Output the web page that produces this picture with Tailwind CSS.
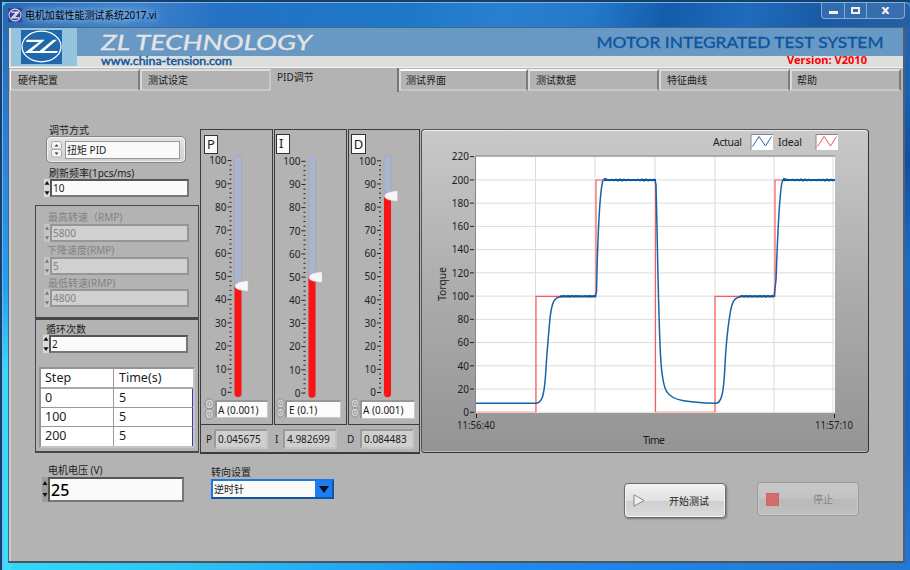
<!DOCTYPE html>
<html lang="zh-CN">
<head>
  <meta charset="UTF-8" />
  <meta name="viewport" content="width=device-width, initial-scale=1" />
  <title>电机加载性能测试系统2017.vi</title>
  <script src="https://cdn.jsdelivr.net/npm/@tailwindcss/browser@4"></script>
</head>
<body class="w-[910px] h-[570px] overflow-hidden bg-[#0d3c78] font-['Noto_Sans','Noto_Sans_CJK_SC',sans-serif] text-[10px] leading-none text-[#1c1c1c]">
  <div class="w-[910px] h-[570px] flex flex-col bg-[linear-gradient(90deg,#35d8f8_0%,#2cc4f5_20%,#1d8af0_55%,#2378d4_100%)] border-t-2 border-l-2 border-[#15406e]">
    <div class="h-[568px] flex flex-col rounded-t-md border-t border-l border-[#7fb2e0] bg-[linear-gradient(180deg,#2569b4_0%,#2a80dc_25%,#1fa0f4_50%,#38d8fb_65%,#3edcfc_100%),linear-gradient(180deg,#2a64a8_0%,#1862b8_15%,#0e4fa4_28%,#1c6cc8_45%,#1a62bc_75%,#2378dc_100%)] bg-no-repeat bg-[position:left_top,right_top] bg-[size:8px_100%,6px_100%]">

      <!-- Title bar -->
      <div class="h-[24px] shrink-0 flex items-start rounded-t-md bg-[linear-gradient(105deg,#2868b2_0%,#4284cc_14%,#2472c4_24%,#1e78c8_45%,#2a80d0_55%,#2478c8_65%,#145cac_73%,#1f6cbc_82%,#1a5aa6_90%,#2460a4_100%)] pl-[5px]">
        <svg class="mt-[5px] w-[14px] h-[14px]" viewBox="0 0 44 38" preserveAspectRatio="none">
          <rect width="44" height="38" fill="#3b3f94" />
          <ellipse cx="22" cy="19" rx="19" ry="16" fill="none" stroke="#d4dcf0" stroke-width="3" />
          <path d="M10 11H28L12 27H24M34 10L19 27H36" fill="none" stroke="#e8ecf8" stroke-width="3.5" />
        </svg>
        <div class="mt-[5px] ml-[3px] h-[14px] leading-[14px] tracking-[-0.1px] whitespace-nowrap text-black [text-shadow:0_0_6px_#a8d0f4,0_0_8px_#a8d0f4]">电机加载性能测试系统2017.vi</div>
        <div class="ml-auto mr-[5px] h-[16px] w-[84px] flex rounded-b-[4px] border border-t-0 border-[#86a9cf] bg-white/10 text-white">
          <div class="w-[23px] flex justify-center border-r border-[#86a9cf] pt-[8px]"><span class="w-[9px] h-[3px] bg-[#f5f0e8]"></span></div>
          <div class="w-[22px] flex justify-center border-r border-[#86a9cf] pt-[4px]"><span class="w-[9px] h-[7px] border-2 border-[#f5f0e8]"></span></div>
          <div class="flex-1 flex justify-center pt-[4px]">
            <svg class="w-[9px] h-[7px]" viewBox="0 0 9 7"><path d="M1.5 0L7.5 7M7.5 0L1.5 7" stroke="#f5f0e8" stroke-width="2.2" /></svg>
          </div>
        </div>
      </div>

      <!-- Client area -->
      <div class="ml-[5px] w-[897px] h-[536px] flex flex-col border-l border-t border-[#4b6680] border-r-2 border-r-[#56606c] border-b-2 border-b-[#4b555c] bg-[#b3b3b3]">
        <header class="h-[39px] shrink-0 flex pl-[2px] bg-[#dededc]">
          <div class="w-[66px] h-[38px] bg-[#96c4de] flex items-center justify-center pr-[6px]">
            <svg class="w-[41px] h-[34px]" viewBox="0 0 42 35" preserveAspectRatio="none">
              <rect width="42" height="35" fill="#1f68ac" />
              <ellipse cx="21" cy="17" rx="20" ry="15.800" fill="none" stroke="#fff" stroke-width="1.300" />
              <path d="M6 10H24.500L11 21.500H21L19 23.800H3.500L18.500 12.300H5Z" fill="#fff" />
              <path d="M33 10H37L23.500 21.500H38L36.500 23.800H16.500Z" fill="#fff" />
            </svg>
          </div>
          <div class="flex-1 flex flex-col">
            <div class="h-[28px] bg-[#6899c5] flex justify-between font-['Lato',sans-serif]">
              <svg class="w-[260px] h-[28px]" viewBox="0 0 260 28"><text x="24" y="22" textLength="211" lengthAdjust="spacingAndGlyphs" font-size="21.500" font-style="italic" fill="#e4e4e4" stroke="#e4e4e4" stroke-width=".3">ZL TECHNOLOGY</text></svg>
              <svg class="w-[320px] h-[28px]" viewBox="0 0 320 28"><text x="13.500" y="20" textLength="287" lengthAdjust="spacingAndGlyphs" font-size="16" fill="#0c559d" stroke="#0c559d" stroke-width=".35">MOTOR INTEGRATED TEST SYSTEM</text></svg>
            </div>
            <div class="h-[11px] flex justify-between">
              <svg class="w-[200px] h-[11px] overflow-visible font-['Lato',sans-serif]" viewBox="0 0 200 11"><text x="24" y="9" textLength="131" lengthAdjust="spacingAndGlyphs" font-size="10.500" fill="#0c559d" stroke="#0c559d" stroke-width=".4">www.china-tension.com</text></svg>
              <svg class="w-[120px] h-[11px] overflow-visible" viewBox="0 0 120 11"><text x="4" y="8" textLength="80" lengthAdjust="spacingAndGlyphs" font-size="10.500" font-weight="700" fill="#fe0000">Version: V2010</text></svg>
            </div>
          </div>
        </header>

        <!-- Tabs -->
        <nav class="h-[24px] shrink-0 flex items-start pl-[1px] border-t border-[#f4f4f4] text-[#202020]">
          <div class="w-[130px] h-[22px] mt-[1px] pl-[7px] pt-[4px] border-t-2 border-l border-r-2 border-b-2 border-t-[#dedede] border-l-white border-r-[#7b7b7b] border-b-[#c8c8c8]">硬件配置</div>
          <div class="w-[131px] h-[22px] mt-[1px] pl-[6px] pt-[4px] border-t-2 border-l-2 border-r-2 border-b-2 border-t-[#dedede] border-l-[#d8d8d8] border-r-[#c8c8c8] border-b-[#c8c8c8]">测试设定</div>
          <div class="w-[128px] h-[24px] pl-[6px] pt-[4px] border-r-2 border-[#777]">PID调节</div>
          <div class="w-[129px] h-[22px] mt-[1px] pl-[5px] pt-[4px] border-t-2 border-l-2 border-r-2 border-b-2 border-t-white border-l-[#d8d8d8] border-r-[#7b7b7b] border-b-[#c8c8c8]">测试界面</div>
          <div class="w-[131px] h-[22px] mt-[1px] pl-[6px] pt-[4px] border-t-2 border-l-2 border-r-2 border-b-2 border-t-[#f0f0f0] border-l-[#d8d8d8] border-r-[#7b7b7b] border-b-[#c8c8c8]">测试数据</div>
          <div class="w-[131px] h-[22px] mt-[1px] pl-[6px] pt-[4px] border-t-2 border-l-2 border-r-2 border-b-2 border-t-[#dedede] border-l-[#d8d8d8] border-r-[#7b7b7b] border-b-[#c8c8c8]">特征曲线</div>
          <div class="w-[111px] h-[22px] mt-[1px] pl-[5px] pt-[4px] border-t-2 border-l-2 border-r-2 border-b-2 border-t-[#dedede] border-l-[#d8d8d8] border-r-[#7b7b7b] border-b-[#c8c8c8]">帮助</div>
        </nav>

        <!-- PID page -->
        <main class="flex-1 flex items-start border-l-2 border-[#c9c9c9] pl-[24px]">

          <!-- Left parameters -->
          <section class="w-[164px] pt-[34px] flex flex-col">
            <div class="h-[11px] pl-[14px] leading-[11px]">调节方式</div>
            <div class="ml-[11px] w-[140px] h-[27px] flex items-center rounded-[5px] border border-[#858585] bg-gradient-to-b from-[#e4e4e4] to-[#cfcfcf] shadow-[inset_0_0_0_1px_#f2f2f2] pl-[4px]">
              <svg class="w-[11px] h-[17px]" viewBox="0 0 11 17">
                <rect x=".5" y=".5" width="10" height="7.500" rx="2" fill="#f6f6f6" stroke="#aaa" />
                <rect x=".5" y="8.500" width="10" height="7.500" rx="2" fill="#f6f6f6" stroke="#aaa" />
                <path d="M3.500 5.500L5.500 3.200L7.500 5.500ZM3.500 11.500L5.500 13.800L7.500 11.500Z" fill="#333" />
              </svg>
              <div class="ml-[3px] w-[115px] h-[18px] pl-[1px] leading-[16px] border border-[#989898] bg-[#fafafa]">扭矩 PID</div>
            </div>
            <div class="h-[16px] pl-[14px] leading-[20px] whitespace-nowrap">刷新频率(1pcs/ms)</div>
            <div class="ml-[9px] h-[18px] flex">
              <svg class="w-[6px] h-[18px]" viewBox="0 0 6 19" preserveAspectRatio="none"><rect width="6" height="19" fill="#d9d9d9" /><path d="M.5 6L3 2L5.500 6ZM.5 13L3 17L5.500 13Z" fill="#111" /></svg>
              <div class="w-[139px] h-[18px] pl-px leading-[14px] border-2 border-[#555] border-r-[#777] border-b-[#777] bg-[#fafafa]">10</div>
            </div>

            <div class="mt-[8px] w-[164px] h-[114px] flex flex-col border border-[#484848] border-b-2 text-[#828282]">
              <div class="h-[18px] pl-[12px] leading-[23px] whitespace-nowrap">最高转速（RMP)</div>
              <div class="ml-[8px] h-[18px] flex">
                <svg class="w-[6px] h-[18px]" viewBox="0 0 6 19" preserveAspectRatio="none"><rect width="6" height="19" fill="#c4c4c4" /><path d="M1 6L3 2.500L5 6ZM1 13L3 16.500L5 13Z" fill="#777" /></svg>
                <div class="w-[139px] h-[18px] pl-px leading-[14px] border-2 border-[#969696] bg-[#d0d0d0]">5800</div>
              </div>
              <div class="h-[15px] pl-[11px] leading-[17px] whitespace-nowrap">下降速度(RMP)</div>
              <div class="ml-[8px] h-[18px] flex">
                <svg class="w-[6px] h-[18px]" viewBox="0 0 6 19" preserveAspectRatio="none"><rect width="6" height="19" fill="#c4c4c4" /><path d="M1 6L3 2.500L5 6ZM1 13L3 16.500L5 13Z" fill="#777" /></svg>
                <div class="w-[139px] h-[18px] pl-px leading-[14px] border-2 border-[#969696] bg-[#d0d0d0]">5</div>
              </div>
              <div class="h-[14px] pl-[12px] leading-[16px] whitespace-nowrap">最低转速(RMP)</div>
              <div class="ml-[8px] h-[18px] flex">
                <svg class="w-[6px] h-[18px]" viewBox="0 0 6 19" preserveAspectRatio="none"><rect width="6" height="19" fill="#c4c4c4" /><path d="M1 6L3 2.500L5 6ZM1 13L3 16.500L5 13Z" fill="#777" /></svg>
                <div class="w-[139px] h-[18px] pl-px leading-[14px] border-2 border-[#969696] bg-[#d0d0d0]">4800</div>
              </div>
            </div>

            <div class="w-[164px] h-[134px] flex flex-col border border-[#484848] border-b-2">
              <div class="h-[15px] pl-[10px] leading-[18px]">循环次数</div>
              <div class="ml-[7px] h-[18px] flex">
                <svg class="w-[6px] h-[18px]" viewBox="0 0 6 19" preserveAspectRatio="none"><rect width="6" height="19" fill="#d9d9d9" /><path d="M.5 6L3 2L5.500 6ZM.5 13L3 17L5.500 13Z" fill="#111" /></svg>
                <div class="w-[139px] h-[18px] pl-px leading-[14px] border-2 border-[#555] border-r-[#777] border-b-[#777] bg-[#fafafa]">2</div>
              </div>
              <div class="mt-[14px] ml-[3px] w-[156px] h-[81px] grid grid-cols-[72px_1px_79px] grid-rows-[20px_19px_19px_19px] border-2 border-[#949494] border-b-[#c4c4c4] border-r-[#c4c4c4] bg-white text-[12.500px] leading-[18px]">
                <div class="pl-[4px] border-b-2 border-[#aaa]">Step</div><div class="bg-[#999]"></div><div class="pl-[5px] border-b-2 border-[#aaa]">Time(s)</div>
                <div class="pl-[4px] border-b border-[#999]">0</div><div class="bg-[#999]"></div><div class="pl-[5px] border-b border-b-[#999] border-r border-r-[#3a3ab0]">5</div>
                <div class="pl-[4px] border-b border-[#999]">100</div><div class="bg-[#999]"></div><div class="pl-[5px] border-b border-b-[#999] border-r border-r-[#3a3ab0]">5</div>
                <div class="pl-[4px]">200</div><div class="bg-[#999]"></div><div class="pl-[5px] border-r border-r-[#3a3ab0]">5</div>
              </div>
            </div>

            <div class="mt-[12px] h-[12px] pl-[13px] leading-[11px] whitespace-nowrap">电机电压 (V)</div>
            <div class="ml-[7px] h-[25px] flex">
              <svg class="w-[6px] h-[25px]" viewBox="0 0 6 25"><rect width="6" height="25" fill="#9c9c9c" /><path d="M.5 8L3 4L5.500 8ZM.5 16L3 20L5.500 16Z" fill="#111" /></svg>
              <div class="w-[136px] h-[25px] pl-[1px] leading-[23px] text-[16px] font-medium text-black border-2 border-[#555] border-r-[#777] border-b-[#777] bg-[#fafafa]">25</div>
            </div>
          </section>

          <div class="flex flex-col">
            <div class="flex">
              <!-- P / I / D sliders -->
              <section class="ml-px mt-[38px] w-[221px] h-[325px] flex flex-col">
                <div class="h-[296px] flex gap-[1px]">
                  <div class="w-[73px] border border-[#3c3c3c] flex flex-col">
                    <div class="mt-[5px] ml-[3px] w-[14px] h-[19px] border border-[#333] bg-[#fafafa] text-[13px] leading-[17px] text-center">P</div>
                    <svg class="slider w-[71px] h-[246px]" data-shift="0" data-top="6.6" data-value="45.9"></svg>
                    <div class="ml-[3px] h-[18px] flex">
                      <svg class="w-[11px] h-[22px] -mt-[2px]" viewBox="0 0 11 22"><ellipse cx="5.500" cy="6" rx="4.500" ry="5" fill="#ccc" stroke="#8b8b8b" /><ellipse cx="5.500" cy="16" rx="4.500" ry="5" fill="#ccc" stroke="#8b8b8b" /><path d="M3.500 7L5.500 3.500L7.500 7ZM3.500 15L5.500 18.500L7.500 15Z" fill="#f4f4f4" stroke="#777" stroke-width=".7" /></svg>
                      <div class="w-[53px] h-[18px] pl-[1px] leading-[16px] whitespace-nowrap border-t-2 border-l-2 border-r border-b border-[#969696] border-r-[#c9c9c9] border-b-[#c9c9c9] bg-[#fbfbfb]">A (0.001)</div>
                    </div>
                  </div>
                  <div class="w-[73px] border border-[#3c3c3c] flex flex-col">
                    <div class="mt-[4px] ml-[1px] w-[14px] h-[20px] border border-[#333] bg-[#fafafa] text-[13px] leading-[17px] pl-[2px]">I</div>
                    <svg class="slider w-[71px] h-[246px]" data-shift="0" data-top="7.3" data-value="50"></svg>
                    <div class="ml-[1px] h-[18px] flex">
                      <svg class="w-[9px] h-[20px] -mt-[2px]" viewBox="0 0 11 22" preserveAspectRatio="none"><ellipse cx="5.500" cy="6" rx="4.500" ry="5" fill="#ccc" stroke="#8b8b8b" /><ellipse cx="5.500" cy="16" rx="4.500" ry="5" fill="#ccc" stroke="#8b8b8b" /><path d="M3.500 7L5.500 3.500L7.500 7ZM3.500 15L5.500 18.500L7.500 15Z" fill="#f4f4f4" stroke="#777" stroke-width=".7" /></svg>
                      <div class="w-[56px] h-[18px] pl-[2px] leading-[16px] whitespace-nowrap border-t-2 border-l-2 border-r border-b border-[#969696] border-r-[#c9c9c9] border-b-[#c9c9c9] bg-[#fbfbfb]">E (0.1)</div>
                    </div>
                  </div>
                  <div class="w-[72px] border border-[#3c3c3c] flex flex-col">
                    <div class="mt-[4px] ml-[2px] w-[15px] h-[20px] border border-[#333] bg-[#fafafa] text-[13px] leading-[18px] text-center">D</div>
                    <svg class="slider w-[70px] h-[246px]" data-shift="1.5" data-top="6.8" data-value="84.8"></svg>
                    <div class="ml-[1px] h-[18px] flex">
                      <svg class="w-[10px] h-[20px] -mt-[2px]" viewBox="0 0 11 22" preserveAspectRatio="none"><ellipse cx="5.500" cy="6" rx="4.500" ry="5" fill="#ccc" stroke="#8b8b8b" /><ellipse cx="5.500" cy="16" rx="4.500" ry="5" fill="#ccc" stroke="#8b8b8b" /><path d="M3.500 7L5.500 3.500L7.500 7ZM3.500 15L5.500 18.500L7.500 15Z" fill="#f4f4f4" stroke="#777" stroke-width=".7" /></svg>
                      <div class="w-[55px] h-[19px] pl-[1px] leading-[17px] whitespace-nowrap border-t-2 border-l-2 border-r border-b border-[#969696] border-r-[#c9c9c9] border-b-[#c9c9c9] bg-[#fbfbfb]">A (0.001)</div>
                    </div>
                  </div>
                </div>
                <div class="w-[220px] h-[29px] flex items-center border border-t-0 border-[#3c3c3c] border-b-2 pl-[5px]">
                  <span class="w-[8px]">P</span>
                  <div class="w-[54px] h-[20px] pl-[2px] leading-[17px] border-2 border-[#9a9a9a] border-r-[#c4c4c4] border-b-[#c4c4c4] bg-[#cfcfcf]">0.045675</div>
                  <span class="w-[15px] pl-[7px]">I</span>
                  <div class="w-[54px] h-[20px] pl-[2px] leading-[17px] border-2 border-[#9a9a9a] border-r-[#c4c4c4] border-b-[#c4c4c4] bg-[#cfcfcf]">4.982699</div>
                  <span class="w-[23px] pl-[10px]">D</span>
                  <div class="w-[54px] h-[20px] pl-[2px] leading-[17px] border-2 border-[#9a9a9a] border-r-[#c4c4c4] border-b-[#c4c4c4] bg-[#cfcfcf]">0.084483</div>
                </div>
              </section>

              <!-- Torque chart -->
              <section class="mt-[38px] w-[448px] h-[324px] rounded-[4px] border border-[#555] border-r-[#333] border-b-[#333] bg-gradient-to-b from-[#c9c9c9] via-[#acacac] via-50% to-[#949494] shadow-[inset_0_1px_0_#eee,inset_0_-1px_0_#bbb]">
                <svg id="chart" class="w-[446px] h-[322px]" viewBox="422 130 446 322" font-size="10.5" fill="#1c1c1c">
                  <text x="713" y="145.500" textLength="29">Actual</text>
                  <rect x="751" y="134.500" width="22" height="15.500" fill="#fff" />
                  <path d="M751 150V134.500H773" fill="none" stroke="#888" />
                  <path d="M752.500 146.500L759 136.500L765.500 146L771.500 136.500" fill="none" stroke="#1c68ac" />
                  <text x="778" y="145.500" textLength="24">Ideal</text>
                  <rect x="816" y="134.500" width="22" height="15.500" fill="#fff" />
                  <path d="M816 150V134.500H838" fill="none" stroke="#888" />
                  <path d="M817.500 146.500L824 136.500L830.500 146L836.500 136.500" fill="none" stroke="#ff5050" />
                  <rect x="475" y="156" width="360" height="257" fill="#fff" />
                  <g id="grid" stroke="#dcdcdc"></g>
                  <path d="M475.500 413V156H835" fill="none" stroke="#858585" />
                  <path d="M476 412H536M655.500 412H715" fill="none" stroke="#ffaaaa" />
                  <path d="M536 412V296.300H596V180H602M655.500 180V412M715 412V296.300H775V180H782" fill="none" stroke="#ff5a5a" stroke-width="1.2" />
                  <path id="actual" fill="none" stroke="#1463a8" stroke-width="1.500" stroke-linejoin="round" />
                  <path id="settled" fill="none" stroke="#0d559c" stroke-width="2" stroke-linejoin="round" />
                  <path d="M476.500 414V418M834.500 414V418" stroke="#222" />
                  <text x="457" y="429" textLength="38" lengthAdjust="spacingAndGlyphs">11:56:40</text>
                  <text x="815" y="429" textLength="38" lengthAdjust="spacingAndGlyphs">11:57:10</text>
                  <text x="643" y="444" textLength="22">Time</text>
                  <text transform="translate(446 301) rotate(-90)" textLength="34">Torque</text>
                </svg>
              </section>
            </div>

            <div class="flex items-start">
              <div class="mt-[12px] ml-[12px]">
                <div class="h-[12px] leading-[12px]">转向设置</div>
                <div class="mt-px w-[123px] h-[20px] flex border-2 border-[#1878ea] border-b-[#1254a8] border-r-[#1254a8] bg-[#fafafa]">
                  <div class="flex-1 pl-[1px] leading-[17px]">逆时针</div>
                  <div class="w-[17px] bg-[#1c7cf0] flex items-center justify-center">
                    <svg class="w-[10px] h-[7px]" viewBox="0 0 10 7"><path d="M0 0H10L5 7Z" fill="#06101c" /></svg>
                  </div>
                </div>
              </div>
              <button class="mt-[29px] ml-[290px] w-[102px] h-[35px] flex items-center rounded-[4px] border border-[#6c6c6c] bg-[linear-gradient(180deg,#f2f2f2_0%,#e0e0e0_50%,#cfcfcf_52%,#dcdcdc_100%)] shadow-[inset_0_0_0_1px_#f4f4f4,1px_1px_2px_#777] pl-[8px]">
                <svg class="w-[12px] h-[13px]" viewBox="0 0 12 13"><path d="M1 .8L11 6.500L1 12.200Z" fill="#f0f0f0" stroke="#888" /></svg>
                <span class="ml-[24px]">开始测试</span>
              </button>
              <button class="mt-[28px] ml-[31px] w-[102px] h-[34px] flex items-center rounded-[4px] border border-[#9c9c9c] bg-[linear-gradient(180deg,#c8c8c8_0%,#c2c2c2_50%,#b9b9b9_52%,#c0c0c0_100%)] shadow-[inset_0_0_0_1px_#c8c8c8] text-[#858585] pl-[8px]">
                <span class="w-[13px] h-[13px] bg-[#d36c6c] border border-[#c66]"></span>
                <span class="ml-[34px]">停止</span>
              </button>
            </div>
          </div>
        </main>
      </div>
    </div>
  </div>

  <script>
    (function() {
      // Vertical sliders: scale, track and thumb
      document.querySelectorAll('.slider').forEach(el => {
        const dx = Number(el.dataset.shift);
        const top = Number(el.dataset.top);
        const value = Number(el.dataset.value);
        const y = v => top + (100 - v) * 2.317;
        let out = '<rect x="' + (33.5 + dx) + '" y="' + (top - 5.5) + '" width="7" height="242" rx="3.5" fill="#a9b4cf" stroke="#8f99b0" stroke-width=".4"/>';
        out += '<path d="M' + (33.5 + dx) + ' ' + y(value) + 'h7V' + (top + 233) + 'a3.5 3.5 0 0 1 -7 0Z" fill="#fb1414"/>';
        for (let v = 0; v <= 100; v += 2) {
          const major = v % 10 === 0;
          out += '<path d="M' + ((major ? 26.5 : 28.5) + dx) + ' ' + y(v) + 'H' + (30.5 + dx) + '" stroke="#222"/>';
          if (major) {
            out += '<text x="' + (25.5 + dx) + '" y="' + (y(v) + 3.8) + '" text-anchor="end" font-size="10" fill="#222">' + v + '</text>';
          }
        }
        out += '<path d="M' + (34 + dx) + ' ' + (y(value) + .3) + 'c0 -2.5 4 -4.2 7 -4.6l4.500 -1q1.500 0 1.500 1.500v7.500q0 1.500 -1.500 1.500l-4.500 -.8c-3 -.4 -7 -1.600 -7 -4.100Z" fill="#f6f6f6" stroke="#c4c4c4" stroke-width=".5"/>';
        el.innerHTML = out;
      });

      // Chart grid and Y axis
      let grid = '';
      for (let v = 0; v <= 220; v += 20) {
        const y = 412.3 - v * 1.162;
        grid += '<path d="M476 ' + y + 'H835"/>';
        grid += '<path d="M470 ' + y + 'H474" stroke="#222"/>';
        grid += '<text x="469" y="' + (y + 3.8) + '" text-anchor="end" stroke="none" font-size="10">' + v + '</text>';
      }
      [535.5, 595, 655, 715, 774, 833].forEach(x => {
        grid += '<path d="M' + x + ' 156V413"/>';
      });
      document.getElementById('grid').innerHTML = grid;

      // Flat parts of the measured curve carry a small ripple
      function flat(x1, x2, y, amp) {
        let d = '';
        for (let x = x1; x <= x2; x += 2) {
          d += (x === x1 ? 'M' : 'L') + x + ' ' + (y + Math.sin(x * 1.7) * amp).toFixed(2);
        }
        return d;
      }
      document.getElementById('actual').setAttribute('d',
        'M476 403.3H536C542 403 544 396 545.5 376C547 350 549 330 550 318C552 302 554 297 562 296.5H595' +
        'L596.5 292C597.5 245 600 190 603 180L605 178.5L608 180H655' +
        'L656 185C657.5 240 658.5 330 661 363C662.5 381 664 388 667 392C672 401 690 402.5 716 403.3' +
        'C722 403 723.5 390 724.5 374C726 340 729 320 730 314C732 302 734 297 742 296.5H774' +
        'L776 280C777.5 240 779 190 782.5 181L784 178.5L787 180H834');
      document.getElementById('settled').setAttribute('d',
        flat(560, 596, 296.3, .4) +
        flat(604, 656, 180, .5) +
        flat(740, 775, 296.3, .4) +
        flat(783, 835, 180, .5));
    })();
  </script>
</body>
</html>
